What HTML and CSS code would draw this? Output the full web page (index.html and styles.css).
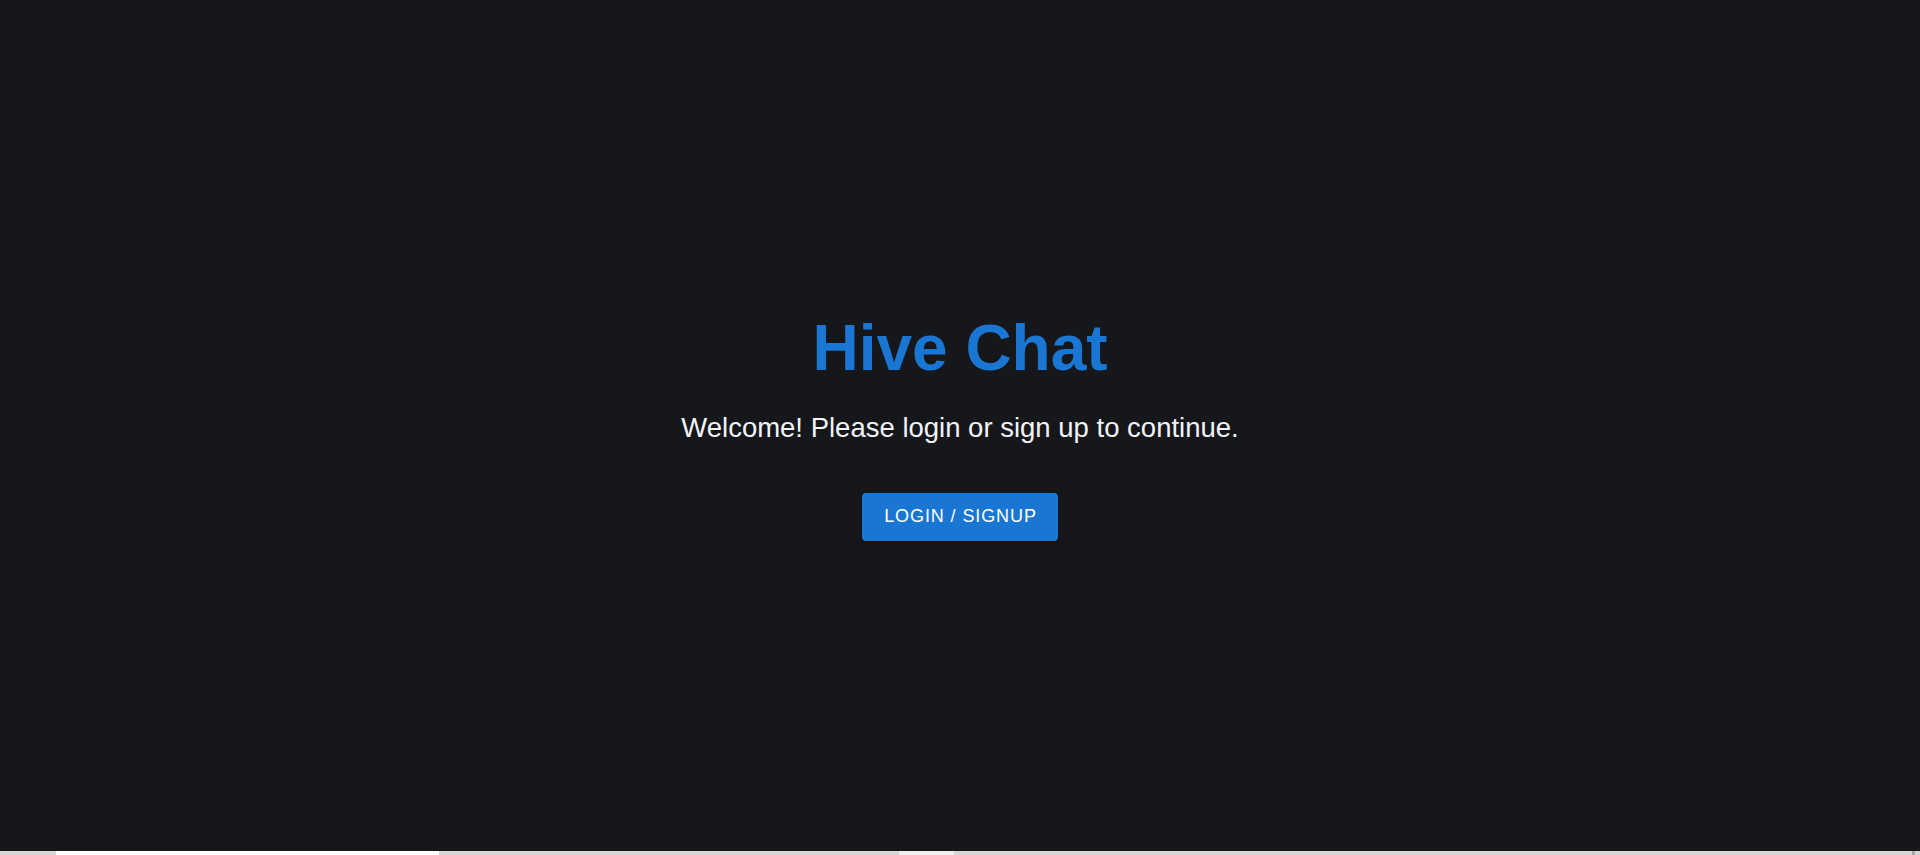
FILE: index.html
```html
<!DOCTYPE html>
<html lang="en">
<head>
<meta charset="utf-8">
<title>Hive Chat</title>
<link rel="stylesheet" href="styles.css">
</head>
<body>
<div class="page">
  <main class="hero">
    <h1 class="title">Hive Chat</h1>
    <p class="subtitle">Welcome! Please login or sign up to continue.</p>
    <button class="btn" type="button">LOGIN / SIGNUP</button>
  </main>
  <div class="strip">
    <span class="seg seg-a"></span>
    <span class="seg seg-b"></span>
    <span class="seg seg-c"></span>
  </div>
</div>
</body>
</html>
```
FILE: styles.css
```css
html, body {
  margin: 0;
  padding: 0;
  height: 100%;
}
body {
  background: #16171b;
  font-family: "Liberation Sans", Arial, sans-serif;
  overflow: hidden;
}
.page {
  display: flex;
  flex-direction: column;
  height: 855px;
}
.hero {
  flex: 1;
  display: flex;
  flex-direction: column;
  align-items: center;
  justify-content: center;
}
.title {
  margin: 0 0 21px;
  font-size: 64px;
  line-height: 1.2;
  font-weight: 700;
  color: #1976d2;
}
.subtitle {
  margin: 0 0 45px;
  font-size: 27.5px;
  line-height: 40px;
  color: #f2f4f7;
}
.btn {
  height: 48px;
  padding: 0 21px 0 22px;
  border: none;
  border-radius: 4px;
  background: #1976d2;
  color: #ffffff;
  font-family: "Liberation Sans", Arial, sans-serif;
  font-size: 18px;
  letter-spacing: 0.9px;
  font-weight: 400;
  box-shadow: 0 3px 1px -2px rgba(0,0,0,.2), 0 2px 2px 0 rgba(0,0,0,.14), 0 1px 5px 0 rgba(0,0,0,.12);
  cursor: pointer;
}
.strip {
  height: 4px;
  background: #d6d6d6;
  display: flex;
}
.seg {
  display: block;
  height: 4px;
}
.seg-a {
  margin-left: 56px;
  width: 383px;
  background: #ffffff;
}
.seg-b {
  margin-left: 460px;
  width: 55px;
  background: #f0f0f0;
}
.seg-c {
  margin-left: auto;
  margin-right: 5px;
  width: 3px;
  background: #a8a8a8;
}
```
